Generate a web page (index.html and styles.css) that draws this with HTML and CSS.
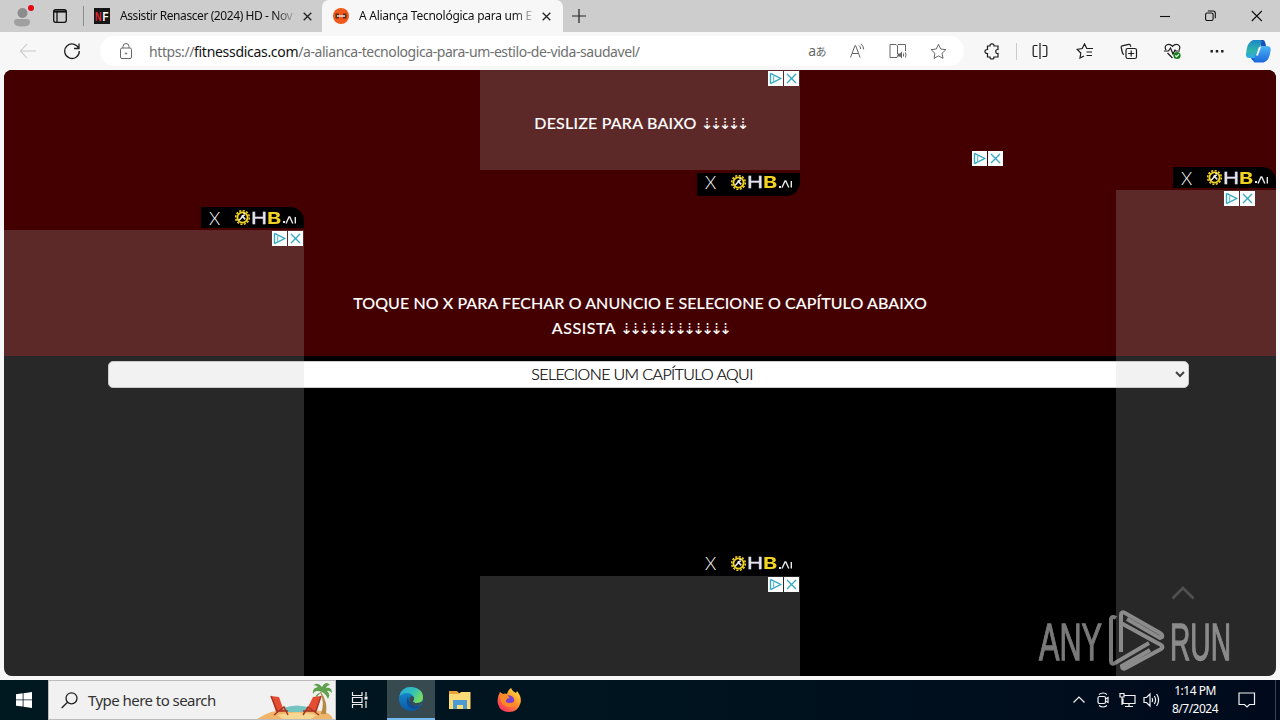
FILE: index.html
```html
<!DOCTYPE html>
<html lang="pt-BR">
<head>
    <meta charset="UTF-8">
    <meta name="viewport" content="width=device-width, initial-scale=1.0">
    <title>A Aliança Tecnológica para um Estilo de Vida Saudável</title>
    <link rel="stylesheet" href="styles.css">
</head>
<body>
    <!-- Shared symbols -->
    <svg class="sprites" aria-hidden="true">
        <symbol id="adchoices" viewBox="0 0 31 15">
            <path fill="#fff" d="M0 0h15v15H0zM16 0h15v15H16z"/>
            <path fill="none" stroke="#35a9c4" stroke-width="1.4" d="M2.500 2.300v10.400M2.500 2.300L12.700 7.500 2.500 12.700M19 3l9 9M28 3l-9 9"/>
            <path fill="none" stroke="#6dbfd3" stroke-width="1.300" d="M5.600 5v6"/>
        </symbol>
        <symbol id="gear" viewBox="0 0 18 18">
            <circle cx="9" cy="9" r="5.400" fill="none" stroke="#f3d321" stroke-width="2"/>
            <circle cx="9" cy="9" r="7.200" fill="none" stroke="#f3d321" stroke-width="1.700" stroke-dasharray="2.200 1.570"/>
            <path d="M5.500 12l3-3.500 3-2.500M8 7l4 4M10 5.500l1.500-1" fill="none" stroke="#eee" stroke-width="1.600"/>
        </symbol>
        <symbol id="ai" viewBox="0 0 12 8">
            <path d="M1 7.500l3-6.500h.8l3 6.500M10.300 1v6.500" fill="none" stroke="#e8e8e8" stroke-width="1.400"/>
        </symbol>
    </svg>

    <!-- Tabs -->
    <div class="tabs">
        <div class="profile">
            <svg width="48" height="32" viewBox="0 0 48 32"><circle cx="22.500" cy="13" r="5" fill="#8c8c8c"/><path fill="#a0a0a0" d="M14 22q0-3 3-3h10q3 0 3 3 0 4.500-8 4.500t-8-4.500z"/><circle cx="31" cy="8" r="3" fill="#e30613"/></svg>
        </div>
        <svg class="workspaces" width="16" height="16" viewBox="0 0 16 16"><rect x="1.700" y="1.700" width="12.600" height="12.600" rx="2" fill="none" stroke="#111" stroke-width="1.300"/><path d="M1.700 3.500h12.600" stroke="#111" stroke-width="2.200"/><path d="M5 4v10" stroke="#111" stroke-width="1.300"/></svg>
        <div class="tab">
            <svg width="16" height="16" viewBox="0 0 16 16"><path fill="#161616" d="M0 0h16v16H0z"/><text class="nf red" x="1" y="13" textLength="6.500" lengthAdjust="spacingAndGlyphs">N</text><text class="nf" x="8.500" y="13" textLength="6" lengthAdjust="spacingAndGlyphs">F</text></svg>
            <span class="tab-title first">Assistir Renascer (2024) HD - Nov</span>
            <svg class="close" width="9" height="9" viewBox="0 0 9 9"><path d="M.7.7l7.600 7.600M8.300.7L.7 8.300"/></svg>
        </div>
        <div class="tab active">
            <svg width="16" height="16" viewBox="0 0 16 16"><circle cx="8" cy="8" r="8" fill="#f0571b"/><path fill="#54301f" d="M2.500 5.500h3.500v5H2.500zM10 5.500h3.500v5H10z"/><path stroke="#f5ded2" stroke-width="1.500" d="M4 8h8"/></svg>
            <span class="tab-title second">A Aliança Tecnológica para um E</span>
            <svg class="close" width="9" height="9" viewBox="0 0 9 9"><path d="M.7.7l7.600 7.600M8.300.7L.7 8.300"/></svg>
        </div>
        <svg class="new-tab" width="14" height="14" viewBox="0 0 14 14"><path d="M7 0v14M0 7h14" stroke="#222" stroke-width="1.200"/></svg>
        <div class="window-buttons">
            <svg width="10" height="12" viewBox="0 0 10 12"><path d="M0 6.500h10"/></svg>
            <svg width="11" height="12" viewBox="0 0 11 12"><rect x=".6" y="3" width="7.500" height="7.500" rx="1.500"/><path d="M2.800 1h5.200q2.300 0 2.300 2.300v5"/></svg>
            <svg width="12" height="12" viewBox="0 0 12 12"><path d="M.8 1l10 10M10.800 1l-10 10"/></svg>
        </div>
    </div>

    <!-- Toolbar -->
    <div class="toolbar">
        <svg class="back" width="18" height="16" viewBox="0 0 18 16"><path d="M17 8H1.500M8 1L1.500 8 8 15" fill="none" stroke="#c8c8c8" stroke-width="1.100"/></svg>
        <svg class="reload" width="18" height="18" viewBox="0 0 18 18"><path d="M15.800 6.500A7.300 7.300 0 1 0 16.300 9M16 1.500v5h-5" fill="none" stroke="#222" stroke-width="1.300"/></svg>
        <div class="address">
            <svg width="14" height="18" viewBox="0 0 14 18"><rect x="1.500" y="6" width="11" height="10.500" rx="1.500"/><path d="M4 6V4.500Q4 1.500 7 1.500t3 3V6"/><circle cx="7" cy="11.500" r=".7"/></svg>
            <div class="url"><span class="scheme">https://</span><b>fitnessdicas.com</b><span class="path">/a-alianca-tecnologica-para-um-estilo-de-vida-saudavel/</span></div>
            <div class="address-icons">
                <span class="translate">a<small>あ</small></span>
                <svg width="17" height="16" viewBox="0 0 17 16"><path d="M1.500 14.500L6 2.500h.6l4.500 12M3 10.500h6.500M10 2.500q1.500 1 1.800 3.500M12 .8q2.500 2 2.700 5.700"/></svg>
                <svg width="18" height="16" viewBox="0 0 18 16"><path d="M8 14.500H1v-13h6l1 1 1-1h7.500V8M8.500 2.500v9M8 14.500l1-2.500"/><path class="speaker" d="M9 10.500h2l2-2v7l-2-2H9z"/><path d="M14.500 10.500v3M16.500 9.500q1 2.500 0 5"/></svg>
                <svg width="17" height="17" viewBox="0 0 17 17"><path d="M8.500 1.300l2.200 4.700 5.100.7-3.700 3.600.9 5.100-4.500-2.500L4 15.400l.9-5.100L1.200 6.700 6.300 6z"/></svg>
            </div>
        </div>
        <div class="tools">
            <svg class="puzzle" width="17" height="17" viewBox="0 0 17 17"><path d="M3.500 3H6q-.2-2.200 2-2.200T10 3h4v3.500q-2.200-.2-2.200 2T14 10.500V14h-4q.2 2-2 2t-2-2H3.500v-3.500Q1 10.600 1 8.500t2.500-2z"/></svg>
            <i class="divider"></i>
            <svg class="split" width="16" height="16" viewBox="0 0 16 16"><path d="M5.500 2.500h-3q-1.300 0-1.300 1.300v8.400q0 1.300 1.300 1.300h3M10.500 2.500h3q1.300 0 1.300 1.300v8.400q0 1.300-1.300 1.300h-3M8 0v16"/></svg>
            <svg class="favs" width="17" height="16" viewBox="0 0 17 16"><path d="M13 5.500h-2.200L8.500 1 6.200 5.500l-5 .8L4.800 10 4 15l4-2M10.500 5.500H17M10.500 9H16M10.500 12.500H16"/></svg>
            <svg class="collections" width="18" height="17" viewBox="0 0 18 17"><rect x="6" y="5.500" width="10.500" height="10" rx="1.800"/><path d="M11.200 7.500v6M8.200 10.500h6M4 11.500q-1.200-.2-1.500-1.500L1.200 4.500Q.9 3.200 2.200 2.900l6.500-1.600q1.300-.2 1.600.9l.5 1.500"/></svg>
            <svg class="health" width="18" height="17" viewBox="0 0 18 17"><path d="M2 7Q0 3.500 3 1.800 6 .5 8.500 3.300 11 .5 14 1.800 17 3.500 15 7M0 8h4.500l2-3 2.500 6 2-4 .8 1H16M3.500 10l5 5"/><circle cx="13" cy="12.500" r="3.600" class="ok"/><path class="tick" d="M11.300 12.500l1.200 1.200 2.300-2.400"/></svg>
            <svg class="more" width="14" height="4" viewBox="0 0 14 4"><path class="dots" d="M.5 1h2.400v2.400H.5zM5.800 1h2.400v2.400H5.800zM11.100 1h2.400v2.400h-2.400z"/></svg>
            <svg class="copilot" width="25" height="23" viewBox="0 0 25 23">
                <defs>
                    <linearGradient id="cp1" x2="0" y2="1"><stop stop-color="#1b86ca"/><stop offset=".6" stop-color="#2fb5a8"/><stop offset="1" stop-color="#2fa8ee"/></linearGradient>
                    <linearGradient id="cp2" x2="0" y2="1"><stop stop-color="#4bb6f4"/><stop offset="1" stop-color="#1c66dc"/></linearGradient>
                </defs>
                <path fill="#1752b9" d="M13 0h4q1.500 0 2 2l1.300 4.500H15z"/>
                <path fill="url(#cp1)" d="M7 0h7q2 0 1.500 2l-4 13q-1 3-4 3H3q-3.500 0-3-4Q1 2 7 0z"/>
                <path fill="url(#cp2)" d="M17 6h4q4 0 3.700 4Q23.500 21 17.500 22.500H9q-2 0-1.500-2l4-11.500q1-3 5.500-3z"/>
                <path fill="#f7f7f7" d="M13 7h2l-3 8.500h-2z"/>
                <path fill="#1668d0" d="M5 18h4l-.8 3q-2 .5-3.200-3z"/>
            </svg>
        </div>
    </div>

    <!-- Page -->
    <main class="page">
        <div class="hero">
            <p>TOQUE NO X PARA FECHAR O ANUNCIO E SELECIONE O CAPÍTULO ABAIXO</p>
            <p class="assista">ASSISTA <span class="arrows">⇣⇣⇣⇣⇣⇣⇣⇣⇣⇣⇣⇣</span></p>
        </div>
        <div class="select">
            <span>SELECIONE UM CAPÍTULO AQUI</span>
            <svg width="10" height="7" viewBox="0 0 10 7"><path d="M1 1l4 4 4-4" fill="none" stroke="#222" stroke-width="2"/></svg>
        </div>

        <!-- Floating ads -->
        <div class="ad ad-top"><p>DESLIZE PARA BAIXO <span class="arrows">⇣⇣⇣⇣⇣</span></p><svg class="choices"><use href="#adchoices"/></svg></div>
        <div class="ad ad-left"><svg class="choices"><use href="#adchoices"/></svg></div>
        <div class="ad ad-right"><svg class="choices"><use href="#adchoices"/></svg></div>
        <div class="ad ad-bottom"><svg class="choices"><use href="#adchoices"/></svg></div>
        <svg class="choices lone"><use href="#adchoices"/></svg>
        <div class="badge badge-top"><span>X</span><svg class="gear"><use href="#gear"/></svg><i class="h">H</i><i class="b">B</i><i class="dot"></i><svg class="ai"><use href="#ai"/></svg></div>
        <div class="badge badge-left"><span>X</span><svg class="gear"><use href="#gear"/></svg><i class="h">H</i><i class="b">B</i><i class="dot"></i><svg class="ai"><use href="#ai"/></svg></div>
        <div class="badge badge-right"><span>X</span><svg class="gear"><use href="#gear"/></svg><i class="h">H</i><i class="b">B</i><i class="dot"></i><svg class="ai"><use href="#ai"/></svg></div>
        <div class="badge badge-bottom"><span>X</span><svg class="gear"><use href="#gear"/></svg><i class="h">H</i><i class="b">B</i><i class="dot"></i><svg class="ai"><use href="#ai"/></svg></div>

        <svg class="scroll-top" width="24" height="14" viewBox="0 0 24 14"><path d="M1.500 12.500L12 2l10.500 10.500" fill="none" stroke="#505050" stroke-width="2.800"/></svg>
        <svg class="watermark" width="200" height="66" viewBox="0 0 200 66">
            <text x="2" y="50.500" textLength="63" lengthAdjust="spacingAndGlyphs">ANY</text>
            <text x="133" y="50.500" textLength="61" lengthAdjust="spacingAndGlyphs">RUN</text>
            <path d="M79 9q-5-3-5 2v41q0 4 4 2l34-20M84 43V6q0-4 4-2l35 20q3 2 2 4l-2 1-33-19M84 14l40 22q3 2 0 4L89 59q-4 2-4-2l28-16"/>
        </svg>
    </main>

    <!-- Taskbar -->
    <footer class="taskbar">
        <div class="start"><svg width="16" height="16" viewBox="0 0 16 16"><path fill="#fff" d="M0 2.200L6.700 1.300v6.200H0zM7.500 1.200L16 0v7.500H7.500zM0 8.300h6.700v6.300L0 13.700zM7.500 8.300H16V16l-8.500-1.200z"/></svg></div>
        <div class="search">
            <svg width="17" height="17" viewBox="0 0 17 17"><circle cx="10.500" cy="6.300" r="5.500" fill="none" stroke="#222" stroke-width="1.300"/><path d="M6.500 10.200L.7 16" stroke="#222" stroke-width="1.400"/></svg>
            <span>Type here to search</span>
            <svg class="beach" width="78" height="38" viewBox="0 0 78 38">
                <path fill="#efb66b" d="M0 38q6-4 14-7 24-6 50-1 10 2 12 8z"/>
                <path fill="#f8d793" d="M20 34q20-5 40 0l-6 4H26z"/>
                <path fill="#74c4c0" d="M26 27q14-5 28 0l-3 4H28z"/>
                <path fill="#b68a45" d="M64 11q7 10 5 22h-5q4-12-1-22z"/>
                <path fill="#5fa14d" d="M65 11q-7-3-9 2-1-6 5-7-3-3-5-1 4-5 9 1 4-7 8-2-3 0-4 3 6-1 6 5-3-3-5-2 4 3 1 8-2-5-6-7-5 3-6 8-2-6 6-8z"/>
                <path fill="#e34d31" d="M14 15l8 1 5 14-8 1zM64 15l-8 1-7 14 10 1z"/>
                <path fill="none" stroke="#a93625" stroke-width="1.500" d="M14 15l6 15h11M17 34l10-8 4 8M64 15l-5 15H46M62 34l-11-8-5 8"/>
            </svg>
        </div>
        <div class="task-icons">
            <div class="task"><svg width="18" height="18" viewBox="0 0 18 18"><path fill="none" stroke="#eee" stroke-width="1.200" d="M1.500 1v3.500h9.500V1M1.500 17v-3.500h9.500V17M1.500 6.500h9.500v5H1.500zM15 1v4M15 10v7"/><path fill="#eee" d="M13.500 5.500h3v3h-3z"/></svg></div>
            <div class="task running">
                <svg width="24" height="24" viewBox="0 0 24 24">
                    <defs>
                        <linearGradient id="e1" x2="1" y2=".5"><stop stop-color="#26a7df"/><stop offset=".6" stop-color="#35c1b5"/><stop offset="1" stop-color="#74db61"/></linearGradient>
                        <linearGradient id="e2" x2="0" y2="1"><stop stop-color="#1793d6"/><stop offset="1" stop-color="#0c59a4"/></linearGradient>
                    </defs>
                    <circle cx="12" cy="12" r="12" fill="url(#e2)"/>
                    <path fill="url(#e1)" d="M.3 9.500Q2 0 12 0q12 1 12 10.500 0 5.500-6 5.500-4 0-4-2 1.500-1.500 1-3.500Q13 6 8 6 3 6 .3 9.500z"/>
                    <path fill="#124c91" d="M9 9q-4 10 5 13 5 .5 8-4-4 2-8 0-5-3-5-9z"/>
                    <path fill="#364a50" d="M14 14q1.500-1.500 1-3.500-1-1.500-2.500-1.500-2.500 1-2 4.500.6 4 5 5.200 4 .5 7-1.700L23.500 14Q22 16 18 16q-4 0-4-2z"/>
                </svg>
            </div>
            <div class="task"><svg width="22" height="20" viewBox="0 0 22 20"><path fill="#e8a33a" d="M0 1h8l2 2h11v6H0z"/><path fill="#fbdb76" d="M0 4h10l2-2h9.500v17H0z"/><path fill="#4a9ad4" d="M4 10h14v9h-4v-4H8v4H4z"/></svg></div>
            <div class="task">
                <svg width="24" height="24" viewBox="0 0 24 24">
                    <defs><linearGradient id="ff" x1="1" x2=".2" y2="1"><stop stop-color="#fff34f"/><stop offset=".45" stop-color="#ff9a27"/><stop offset="1" stop-color="#f92c60"/></linearGradient></defs>
                    <path fill="url(#ff)" d="M3 4l3 2q2-1 4 0 1-4 4-6 1 3 5 5l1-2q5 6 3.500 12Q21 24 12 24 3 24 1 16-.5 10 3 4z"/>
                    <circle cx="12" cy="12.500" r="5.200" fill="#7a3ed0"/>
                    <path fill="#ff8b28" d="M3 8q4-3 8 0l2 2q-3 0-4 2-1 3 4 3 4 0 5-3 1 7-6 7Q4 19 3 8z"/>
                </svg>
            </div>
        </div>
        <div class="tray">
            <svg class="up" width="14" height="14" viewBox="0 0 14 14"><path d="M1.500 9.500L7 4l5.500 5.500"/></svg>
            <svg class="meet" width="14" height="18" viewBox="0 0 14 18"><rect x="2" y="5.500" width="7.500" height="7" rx="1.500"/><path d="M9.500 8L12 6.500v5L9.500 10M3 3.500q4-3 8 0M3 14.500q4 3 8 0"/></svg>
            <svg class="net" width="17" height="16" viewBox="0 0 17 16"><path d="M5 3.500h11v8H4v-5M10 11.500v3M6 14.500h8M1 1.500h4v3.500H1zM3 5v8"/></svg>
            <svg class="sound" width="17" height="16" viewBox="0 0 17 16"><path d="M1 5.500h2.500L7 2v12l-3.500-3.500H1zM9 6q1.200 2 0 4M11.300 4q2.600 4 0 8M13.600 2q4 6 0 12"/></svg>
            <div class="clock"><span>1:14 PM</span><span>8/7/2024</span></div>
            <svg class="notify" width="18" height="17" viewBox="0 0 18 17"><path d="M1 1h15.500v11.500h-5L9 15l-2.500-2.500H1z"/></svg>
            <i class="peek"></i>
        </div>
    </footer>
</body>
</html>
```
FILE: styles.css
```css
* {
    box-sizing: border-box;
}

body {
    margin: 0;
    width: 1280px;
    height: 720px;
    overflow: hidden;
    display: flex;
    flex-direction: column;
    background: #f7f7f7;
    font-family: "Noto Sans", sans-serif;
    color: #111;
}

svg {
    display: block;
    flex-shrink: 0;
}

p {
    margin: 0;
}

.sprites {
    position: absolute;
    width: 0;
    height: 0;
}

/* Tabs */
.tabs {
    height: 32px;
    flex-shrink: 0;
    display: flex;
    align-items: center;
    background: #cdcdcd;
}

.workspaces {
    margin: 0 15px 0 4px;
}

.tab {
    height: 32px;
    width: 239px;
    display: flex;
    align-items: center;
    padding-left: 10px;
    border-left: 1px solid #8d8d8d;
}

.tab:not(.active) {
    height: 20px;
}

.tab.active {
    width: 241px;
    padding-left: 11px;
    background: #f7f7f7;
    border: 0;
    border-radius: 7px 7px 0 0;
}

.nf {
    font: bold 13px "Liberation Sans", sans-serif;
    fill: #fff;
}

.nf.red {
    fill: #e32636;
}

.tab-title {
    width: 175px;
    margin-left: 10px;
    font-size: 12px;
    line-height: 20px;
    white-space: nowrap;
    -webkit-mask-image: linear-gradient(90deg, #000 155px, transparent 178px);
    mask-image: linear-gradient(90deg, #000 155px, transparent 178px);
}

.tab-title.first {
    letter-spacing: -0.42px;
}

.tab-title.second {
    letter-spacing: -0.26px;
}

.close {
    margin-left: 8px;
    fill: none;
    stroke: #222;
    stroke-width: 1.3;
}

.new-tab {
    margin-left: 9px;
}

.window-buttons {
    display: flex;
    gap: 35px;
    margin-left: auto;
    padding-right: 17px;
    fill: none;
    stroke: #111;
    stroke-width: 1.1;
}

/* Toolbar */
.toolbar {
    height: 38px;
    flex-shrink: 0;
    display: flex;
    align-items: center;
    padding-left: 19px;
    background: #f7f7f7;
}

.reload {
    margin: 0 19px 0 26px;
}

.address {
    width: 864px;
    height: 30px;
    display: flex;
    align-items: center;
    padding-left: 19px;
    background: #fff;
    border-radius: 15px;
    fill: none;
    stroke: #666;
}

.url {
    display: flex;
    margin-left: 16px;
    font-size: 14px;
    color: #707070;
    white-space: nowrap;
}

.url b {
    font-weight: normal;
    color: #111;
    letter-spacing: -0.3px;
}

.url .scheme {
    letter-spacing: -0.4px;
}

.url .path {
    letter-spacing: -0.43px;
}

.address-icons {
    display: flex;
    align-items: center;
    gap: 23px;
    margin-left: auto;
    padding-right: 17px;
}

.translate {
    font: 14px "Noto Sans", "Noto Sans CJK JP", sans-serif;
    line-height: 20px;
    letter-spacing: -0.5px;
    color: #666;
}

.translate small {
    font-size: 11px;
}

.speaker {
    fill: #666;
    stroke: none;
}

.tools {
    display: flex;
    align-items: center;
    margin-left: 20px;
    fill: none;
    stroke: #1b1b1b;
    stroke-width: 1.2;
}

.divider {
    width: 1px;
    height: 17px;
    margin: 0 15px;
    background: #ccc;
}

.favs {
    margin-left: 28px;
}

.collections {
    margin-left: 27px;
}

.health {
    margin-left: 26px;
}

.more {
    margin: 0 22px 0 28px;
}

.copilot {
    stroke: none;
}

.ok {
    fill: #16801d;
    stroke: none;
}

.tick {
    stroke: #fff;
}

.dots {
    fill: #1b1b1b;
    stroke: none;
}

/* Page */
.page {
    position: relative;
    width: 1272px;
    height: 606px;
    flex-shrink: 0;
    margin: 0 4px 4px;
    overflow: hidden;
    background: #000;
    border-radius: 8px;
}

.hero {
    height: 286px;
    padding-top: 220px;
    background: #440000;
    text-align: center;
}

.hero p,
.ad p {
    font: 500 16px/25px Lato, sans-serif;
    color: #fff;
    white-space: nowrap;
    letter-spacing: 0.08px;
    -webkit-text-stroke: 0.1px #fff;
}

.ad p {
    letter-spacing: 0.2px;
}

.hero .assista {
    letter-spacing: 0.5px;
}

p .arrows {
    font-family: "DejaVu Sans", sans-serif;
    font-size: 15px;
    line-height: 20px;
    letter-spacing: -3.57px;
}

.select {
    display: flex;
    align-items: center;
    width: 1081px;
    height: 27px;
    margin: 5px 0 0 104px;
    padding-right: 3px;
    background: #fff;
    border: 1px solid #ccc;
    border-radius: 5px;
}

.select span {
    flex: 1;
    padding-bottom: 2px;
    text-align: center;
    font: 300 16px/24px Lato, sans-serif;
    letter-spacing: -0.6px;
    color: #000;
    -webkit-text-stroke: 0.2px #000;
}

/* Floating ads */
.ad {
    position: absolute;
    background: rgba(192, 192, 192, 0.207);
}

.ad-top {
    left: 476px;
    top: 0;
    width: 320px;
    height: 100px;
    padding-top: 40px;
    text-align: center;
}

.ad-left {
    left: 0;
    top: 160px;
    width: 300px;
    height: 446px;
}

.ad-right {
    right: 0;
    top: 120px;
    width: 160px;
    height: 486px;
}

.ad-bottom {
    left: 476px;
    bottom: 0;
    width: 320px;
    height: 100px;
}

.choices {
    position: absolute;
    top: 1px;
    right: 1px;
    width: 31px;
    height: 15px;
}

.ad-right .choices {
    right: 21px;
}

.choices.lone {
    top: 81px;
    right: 273px;
}

.badge {
    position: absolute;
    display: flex;
    align-items: center;
    width: 103px;
    height: 20px;
    padding-left: 8px;
    background: #000;
    color: #fff;
    border-radius: 0 14px 0 0;
}

.badge span {
    width: 25px;
    font: 300 18px/20px Lato, sans-serif;
}

.badge i {
    font: 16px/18px Inter, sans-serif;
    color: #e4e4ee;
}

.badge .h {
    width: 12px;
    margin-left: 2px;
    transform: scaleX(1.35);
    -webkit-text-stroke: 0.4px #e4e4ee;
}

.badge .b {
    width: 11px;
    margin-left: 4px;
    font-weight: bold;
    color: #f3d321;
    transform: scaleX(1.35);
}

.badge .dot {
    width: 2px;
    height: 2px;
    margin: 9px 0 0 3px;
    background: #e8e8e8;
}

.gear {
    width: 17px;
    height: 17px;
}

.ai {
    width: 12px;
    height: 8px;
    margin-top: 4px;
}

.badge-top {
    left: 693px;
    top: 103px;
    height: 23px;
    padding-bottom: 5px;
    border-radius: 0 0 14px 0;
}

.badge-left {
    left: 197px;
    top: 137px;
    height: 21px;
}

.badge-right {
    right: 0;
    top: 97px;
    height: 21px;
}

.badge-bottom {
    left: 693px;
    top: 483px;
}

.scroll-top {
    position: absolute;
    left: 1167px;
    top: 516px;
}

.watermark {
    position: absolute;
    left: 1033px;
    top: 539px;
    opacity: 0.55;
    fill: none;
    stroke: #ddd;
    stroke-width: 4;
}

.watermark text {
    font: 52px "Liberation Sans", sans-serif;
    fill: #ddd;
    stroke: #ddd;
    stroke-width: 1.3;
}

/* Taskbar */
.taskbar {
    height: 40px;
    flex-shrink: 0;
    display: flex;
    align-items: center;
    background: linear-gradient(90deg, #001820, #00141f 50%, #000a1c);
}

.start {
    width: 48px;
    padding-left: 16px;
}

.search {
    display: flex;
    align-items: center;
    width: 288px;
    height: 40px;
    padding-left: 12px;
    background: #f1f1f1;
    border: 1px solid #bbb;
    font-size: 15px;
    letter-spacing: -0.55px;
    color: #333;
}

.search span {
    margin-left: 10px;
    white-space: nowrap;
}

.beach {
    margin-left: auto;
}

.task-icons {
    display: flex;
}

.task {
    width: 49px;
    height: 40px;
    display: flex;
    align-items: center;
    justify-content: center;
}

.task:first-child {
    width: 51px;
    padding-right: 3px;
}

.running {
    width: 48px;
    background: #364a50;
    border-bottom: 2px solid #76b9ed;
}

.tray {
    display: flex;
    align-items: center;
    margin-left: auto;
    height: 40px;
    width: 208px;
    fill: none;
    stroke: #f2f2f2;
    stroke-width: 1.2;
    color: #fff;
}

.meet {
    margin-left: 10px;
}

.net {
    margin-left: 9px;
}

.sound {
    margin-left: 7px;
}

.clock {
    display: flex;
    flex-direction: column;
    width: 60px;
    margin-left: 5px;
    font-size: 12px;
    line-height: 18px;
    text-align: center;
    letter-spacing: -0.5px;
    white-space: nowrap;
}

.notify {
    margin-left: 13px;
}

.peek {
    width: 1px;
    height: 40px;
    margin-left: auto;
    margin-right: 4px;
    background: #39424f;
}
```
